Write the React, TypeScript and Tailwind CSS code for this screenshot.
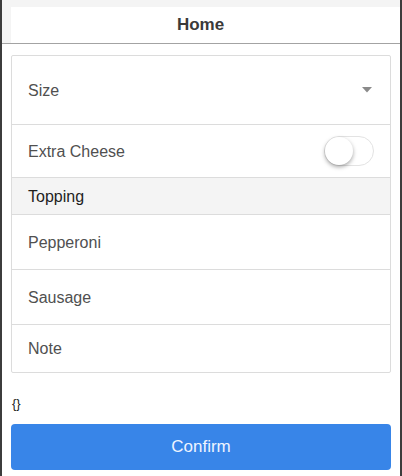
import React from "react";

export default function App() {
  const font = { fontFamily: '"Liberation Sans", Arial, sans-serif' };
  return (
    <div
      className="w-[402px] h-[476px] bg-white border-l-2 border-r-2 border-[#3c3c3c] overflow-hidden flex flex-col"
      style={font}
    >
      {/* Header */}
      <div className="h-[44px] bg-[#f4f4f4] pt-[7px] pl-[9px] border-b border-[#a3a3a3] flex">
        <div className="flex-1 bg-white flex items-center justify-center">
          <span className="text-[17px] font-bold text-[#3a3a3a] leading-none -mt-[1px] mr-[10px]">Home</span>
        </div>
      </div>

      <div className="px-[9px] flex flex-col">
        {/* Card */}
        <div className="mt-[11px] border border-[#dcdcdc] rounded-[2px] flex flex-col text-[16px] text-[#505050]">
          <div className="h-[69px] flex items-center justify-between pl-[16px] pr-[16px] border-b border-[#dcdcdc]">
            <span className="mt-[2px]">Size</span>
            <svg width="10" height="6" viewBox="0 0 10 6" className="mr-[2px]">
              <path d="M0 0 L10 0 L5 5.5 Z" fill="#8a8a8a" />
            </svg>
          </div>
          <div className="h-[53px] flex items-center justify-between pl-[16px] pr-[16px] border-b border-[#dcdcdc]">
            <span className="mt-[1px]">Extra Cheese</span>
            <div className="w-[50px] h-[30px] rounded-full border border-[#e3e3e3] bg-white flex items-center">
              <div className="w-[28px] h-[28px] rounded-full bg-white shadow-[0_2px_4px_rgba(0,0,0,0.35)]" />
            </div>
          </div>
          <div className="h-[37px] flex items-center pl-[16px] bg-[#f4f4f4] border-b border-[#dcdcdc] text-[#1e1e1e]">
            <span className="mt-[1px]">Topping</span>
          </div>
          <div className="h-[55px] flex items-center pl-[16px] border-b border-[#dcdcdc]">
            <span className="mt-[1px]">Pepperoni</span>
          </div>
          <div className="h-[55px] flex items-center pl-[16px] border-b border-[#dcdcdc]">
            <span className="mt-[1px]">Sausage</span>
          </div>
          <div className="h-[47px] flex items-center pl-[16px]">
            <span className="mt-[1px]">Note</span>
          </div>
        </div>

        <div className="h-[51px] flex items-center text-[13px] text-[#222] pl-[1px] pt-[10px]">
          {"{}"}
        </div>

        <button className="h-[46px] w-full rounded-[4px] bg-[#3885e8] text-[#eef4ff] text-[17px] flex items-center justify-center" style={font}>
          Confirm
        </button>
      </div>
    </div>
  );
}
